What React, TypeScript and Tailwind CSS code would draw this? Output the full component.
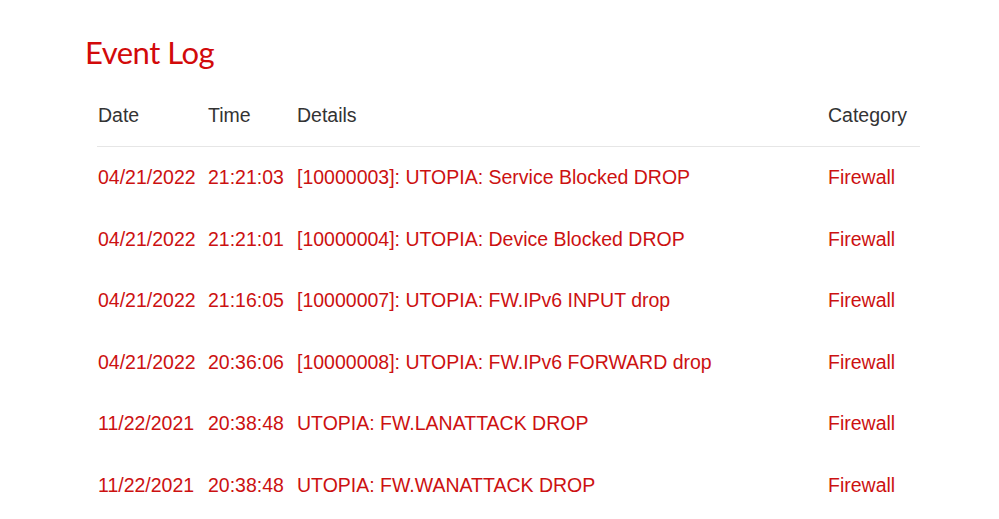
import React from 'react';

type LogRow = { date: string; time: string; details: string; category: string };

const ROWS: LogRow[] = [
  { date: '04/21/2022', time: '21:21:03', details: '[10000003]: UTOPIA: Service Blocked DROP', category: 'Firewall' },
  { date: '04/21/2022', time: '21:21:01', details: '[10000004]: UTOPIA: Device Blocked DROP', category: 'Firewall' },
  { date: '04/21/2022', time: '21:16:05', details: '[10000007]: UTOPIA: FW.IPv6 INPUT drop', category: 'Firewall' },
  { date: '04/21/2022', time: '20:36:06', details: '[10000008]: UTOPIA: FW.IPv6 FORWARD drop', category: 'Firewall' },
  { date: '11/22/2021', time: '20:38:48', details: 'UTOPIA: FW.LANATTACK DROP', category: 'Firewall' },
  { date: '11/22/2021', time: '20:38:48', details: 'UTOPIA: FW.WANATTACK DROP', category: 'Firewall' },
];

export default function App() {
  return (
    <div className="w-[999px] h-[519px] overflow-hidden bg-white font-['Liberation_Sans',Arial,sans-serif]">
      <div className="pl-[85px] pt-[32px]">
        <h1 className="font-['Lato',sans-serif] text-[31px] leading-[40px] tracking-[-0.5px] text-[#d20a0a]">
          Event Log
        </h1>
      </div>

      <div className="pl-[97px] pr-[79px] mt-[13px]">
        <div className="flex h-[62px] items-center border-b border-[#e6e6e6] text-[19.5px] text-[#333]">
          <div className="w-[111px] pl-px">Date</div>
          <div className="w-[89px]">Time</div>
          <div className="flex-1">Details</div>
          <div className="w-[92px]">Category</div>
        </div>
        {ROWS.map((row, i) => (
          <div key={i} className="flex h-[61.5px] items-center text-[19.5px] text-[#cc1111]">
            <div className="w-[111px] pl-px">{row.date}</div>
            <div className="w-[89px]">{row.time}</div>
            <div className="flex-1">{row.details}</div>
            <div className="w-[92px]">{row.category}</div>
          </div>
        ))}
      </div>
    </div>
  );
}
